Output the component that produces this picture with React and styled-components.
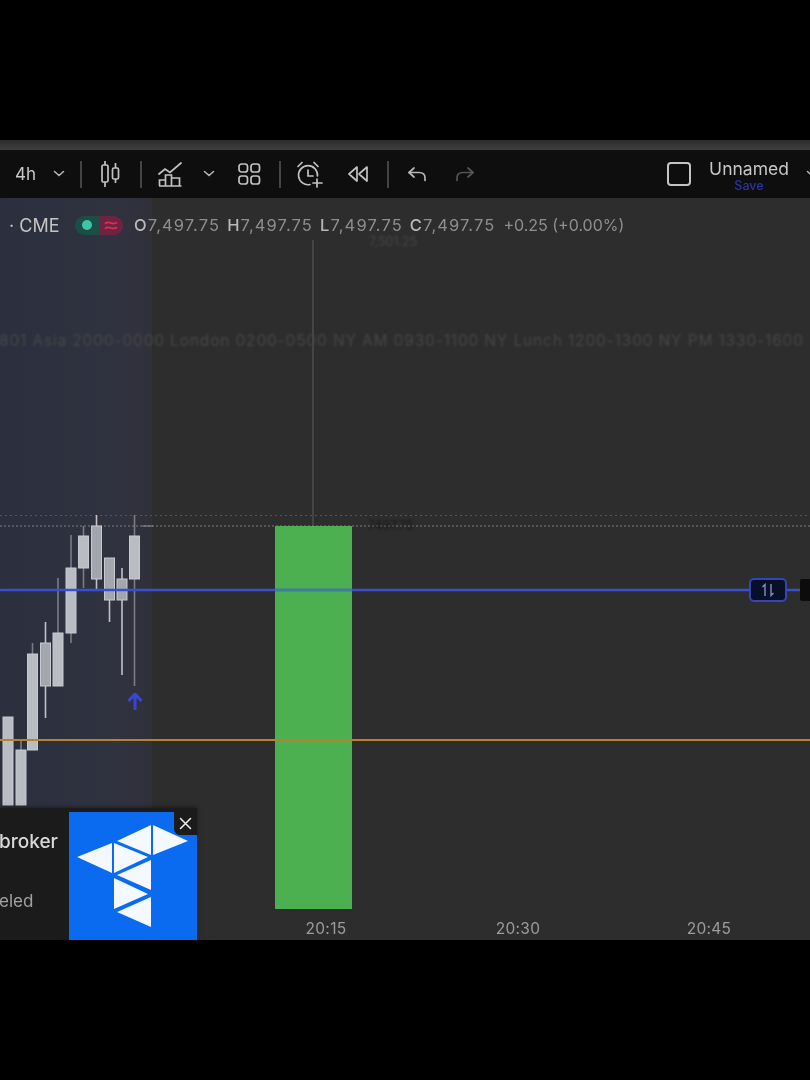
import React from "react"
import styled, { createGlobalStyle } from "styled-components"

const GlobalStyle = createGlobalStyle`
  html, body {
    margin: 0;
    padding: 0;
    background: #000;
  }
  body {
    font-family: Inter, "Liberation Sans", sans-serif;
  }
`

const Page = styled.div`
  width: 810px;
  height: 1080px;
  display: flex;
  flex-direction: column;
  background: #000;
  overflow: hidden;
`
const Letterbox = styled.div`
  height: 140px;
  flex: none;
  background: #000;
`
const Strip = styled.div`
  height: 10px;
  flex: none;
  background: linear-gradient(#2c2c2c, #3e3e3e);
`
const Toolbar = styled.div`
  height: 48px;
  flex: none;
  display: flex;
  align-items: center;
  padding-left: 10px;
  background: #0e0e0e;
  color: #bdbdbd;
  overflow: hidden;
  filter: blur(0.5px);
`
const Slot = styled.div`
  width: ${(p) => p.$w}px;
  flex: none;
  display: flex;
  align-items: center;
  justify-content: center;
`
const Interval = styled.span`
  font-size: 17px;
  color: #c9c9c9;
`
const Separator = styled.div`
  width: 1.5px;
  height: 27px;
  background: #444;
`
const LayoutGroup = styled.div`
  margin-left: auto;
  margin-right: -8px;
  display: flex;
  align-items: center;
`
const LayoutBox = styled.div`
  width: 24px;
  height: 24px;
  box-sizing: border-box;
  border: 2px solid #c4c4c4;
  border-radius: 4px;
  margin-right: 17px;
`
const LayoutName = styled.div`
  width: 82px;
  margin-right: 16px;
  padding-top: 4.5px;
  text-align: center;
  line-height: 1;
`
const NameText = styled.div`
  font-size: 17.5px;
  color: #c6c6c6;
`
const SaveText = styled.div`
  font-size: 12.5px;
  font-weight: 500;
  color: #2f33a8;
  margin-top: 2px;
`
const Chart = styled.div`
  position: relative;
  flex: 1;
  overflow: hidden;
  background: #2d2d2d;
`
const Drawing = styled.svg`
  position: absolute;
  inset: 0;
  filter: blur(0.55px);
`
const Legend = styled.div`
  position: relative;
  display: flex;
  align-items: center;
  height: 54px;
  padding-left: 9px;
  font-size: 16.5px;
  white-space: nowrap;
  filter: blur(0.5px);
`
const Exchange = styled.span`
  width: 66px;
  font-size: 18px;
  color: #c4c4c4;
`
const Pills = styled.div`
  display: flex;
  width: 59px;
  filter: blur(0.6px);
`
const Pill = styled.div`
  width: 24px;
  height: 19px;
  display: flex;
  align-items: center;
  justify-content: center;
  background: ${(p) => p.$bg};
  border-radius: ${(p) => p.$radius};
`
const Dot = styled.div`
  width: 10px;
  height: 10px;
  border-radius: 50%;
  background: #3ec4a6;
`
const Ohlc = styled.span`
  color: #8e8e8e;
  margin-right: 7px;
  letter-spacing: 1.1px;
`
const OhlcChange = styled.span`
  color: #8e8e8e;
  font-size: 16px;
  margin-left: 1px;
`
const OhlcKey = styled.b`
  font-weight: 500;
  color: #b9b9b9;
`
const SessionText = styled.div`
  position: absolute;
  left: -1px;
  top: 133px;
  font-size: 15.5px;
  letter-spacing: 0.84px;
  color: #474749;
  white-space: nowrap;
  filter: blur(0.8px);
`
const PriceTag = styled.div`
  position: absolute;
  left: ${(p) => p.$x}px;
  top: ${(p) => p.$y}px;
  font-size: 12.5px;
  line-height: 1;
  color: ${(p) => p.$color};
  filter: blur(0.8px);
`
const TimeLabel = styled.div`
  position: absolute;
  left: ${(p) => p.$x}px;
  bottom: 2px;
  width: 60px;
  text-align: center;
  font-size: 15.5px;
  letter-spacing: 0.3px;
  color: #9c9c9c;
  filter: blur(0.45px);
`
const OrderTag = styled.div`
  position: absolute;
  left: 749px;
  top: 380px;
  width: 38px;
  height: 24px;
  box-sizing: border-box;
  display: flex;
  align-items: center;
  justify-content: center;
  border: 2px solid #3346b8;
  border-radius: 5px;
  background: #0a0f28;
  filter: blur(0.5px);
`
const OrderStub = styled.div`
  position: absolute;
  left: 800px;
  top: 381px;
  width: 14px;
  height: 22px;
  border-radius: 2px;
  background: #0c0c0c;
  filter: blur(0.7px);
`
const Promo = styled.div`
  position: absolute;
  left: 0;
  bottom: 0;
  width: 197px;
  height: 132px;
  box-sizing: border-box;
  padding-top: 4px;
  display: flex;
  background: #1b1b1b;
  box-shadow: 0 -1px 4px rgba(0, 0, 0, 0.4);
`
const PromoText = styled.div`
  width: 69px;
  overflow: hidden;
  display: flex;
  flex-direction: column;
  filter: blur(0.4px);
`
const PromoTitle = styled.div`
  margin: 18px 0 0 -1px;
  font-size: 19px;
  font-weight: 500;
  color: #d8d8d8;
`
const PromoSub = styled.div`
  margin: 38px 0 0 -1px;
  font-size: 17px;
  color: #a2a2a2;
`
const PromoLogo = styled.div`
  position: relative;
  width: 128px;
  background: #0a6bf0;
  filter: blur(0.3px);
`
const CloseButton = styled.div`
  position: absolute;
  right: 0;
  top: 0;
  width: 23px;
  height: 23px;
  display: flex;
  align-items: center;
  justify-content: center;
  background: #1b1b1b;
  border-bottom-left-radius: 6px;
`

const Chevron = () => (
  <svg width="12" height="8" viewBox="0 0 12 8" fill="none" stroke="#b5b5b5" strokeWidth="1.6" strokeLinecap="round">
    <path d="M1.5 1.5 6 5.5l4.5-4" />
  </svg>
)

const CandleIcon = () => (
  <svg width="20" height="28" viewBox="0 0 20 28" fill="none" stroke="#c2c2c2" strokeWidth="1.7">
    <rect x="2" y="5" width="6" height="17" rx="1.5" />
    <path d="M5 1v4M5 22v5" />
    <rect x="12.5" y="8" width="6" height="11" rx="1.5" />
    <path d="M15.5 3v5M15.5 19v4" />
  </svg>
)

const IndicatorIcon = () => (
  <svg width="24" height="26" viewBox="0 0 24 26" fill="none" stroke="#c2c2c2" strokeWidth="1.7">
    <path d="M1 13l6-5 5 3.5L23 2" strokeLinecap="round" />
    <path d="M1 25h22.5M1.5 25v-6h6v6M7.5 25V14h6v11M13.5 25v-8h8v8" />
  </svg>
)

const GridIcon = () => (
  <svg width="23" height="22" viewBox="0 0 23 22" fill="none" stroke="#c2c2c2" strokeWidth="1.7">
    <rect x="1" y="1" width="8.5" height="8" rx="2.5" />
    <rect x="13" y="1" width="8.5" height="8" rx="2.5" />
    <rect x="1" y="13" width="8.5" height="8" rx="2.5" />
    <rect x="13" y="13" width="8.5" height="8" rx="2.5" />
  </svg>
)

const AlarmIcon = () => (
  <svg width="27" height="27" viewBox="0 0 27 27" fill="none" stroke="#c2c2c2" strokeWidth="1.7" strokeLinecap="round">
    <path d="M14 23.5A9.5 9.5 0 1 1 21.5 15" />
    <path d="M12 9v6h5" />
    <path d="M2 5.5 6 1.5M18 1.5l4 4" />
    <path d="M21 18v8M17 22h9" />
  </svg>
)

const RewindIcon = () => (
  <svg width="22" height="18" viewBox="0 0 22 18" fill="none" stroke="#c2c2c2" strokeWidth="1.7" strokeLinejoin="round">
    <path d="M10 2 2 9l8 7zM20 2l-8 7 8 7z" />
  </svg>
)

const UndoIcon = ({ color, flip }) => (
  <svg width="20" height="15" viewBox="0 0 20 15" fill="none" stroke={color} strokeWidth="1.7" strokeLinecap="round" strokeLinejoin="round" transform={flip ? "scale(-1 1)" : undefined}>
    <path d="M7 1 2 5.5l5 4.5" />
    <path d="M2 5.5h10c3.5 0 6 2 6 5.5v2.5" />
  </svg>
)

const WaveIcon = () => (
  <svg width="14" height="11" viewBox="0 0 16 12" fill="none" stroke="#d8305a" strokeWidth="2">
    <path d="M1 4c3-2.400 5-1.600 7-.8s4 1.400 7-.8M1 9.600c3-2.400 5-1.600 7-.8s4 1.400 7-.8" />
  </svg>
)

const candles = [
  { x: 8, wt: 717, wb: 805, bt: 717, bb: 805 },
  { x: 21, wt: 739, wb: 805, bt: 750, bb: 805 },
  { x: 32.5, wt: 643, wb: 750, bt: 654, bb: 750 },
  { x: 45.5, wt: 622, wb: 718, bt: 643, bb: 686, hollow: true },
  { x: 58, wt: 578, wb: 686, bt: 633, bb: 686 },
  { x: 71, wt: 535, wb: 643, bt: 568, bb: 633 },
  { x: 83.5, wt: 526, wb: 588, bt: 536, bb: 568 },
  { x: 96.5, wt: 515, wb: 590, bt: 526, bb: 579, hollow: true },
  { x: 109.5, wt: 558, wb: 622, bt: 558, bb: 600, hollow: true },
  { x: 122, wt: 568, wb: 675, bt: 579, bb: 600, hollow: true },
  { x: 134.5, wt: 515, wb: 686, bt: 536, bb: 579 },
]

const ChartDrawing = () => (
  <Drawing width="810" height="742" viewBox="0 198 810 742">
    <defs>
      <linearGradient id="session" x1="0" y1="0" x2="1" y2="0">
        <stop offset="0" stopColor="#2b2f3e" />
        <stop offset="0.8" stopColor="#30323f" />
        <stop offset="1" stopColor="#30303a" />
      </linearGradient>
    </defs>
    <rect x="0" y="198" width="152" height="742" fill="url(#session)" />
    <path d="M313 240v286" stroke="#5e5e5e" strokeWidth="1" />
    <path d="M0 515.5h810" stroke="#555" strokeWidth="1" strokeDasharray="2 3" />
    <path d="M0 526h810" stroke="#808080" strokeWidth="1" strokeDasharray="2 2" />
    <path d="M142 526h11" stroke="#8f8f8f" strokeWidth="1" />
    <rect x="275" y="526" width="77" height="383" fill="#4cb050" />
    {candles.map((c) => (
      <g key={c.x}>
        <path d={`M${c.x} ${c.wt}V${c.wb}`} stroke={c.hollow ? "#c0c1c8" : "#7a7c84"} strokeWidth="1.6" />
        <rect
          x={c.x - 5}
          y={c.bt}
          width="10"
          height={c.bb - c.bt}
          fill={c.hollow ? "#a4a6ad" : "#babcc4"}
          stroke="#c8c9d0"
          strokeWidth="1"
        />
      </g>
    ))}
    <path d="M0 590h750M786 590h24" stroke="#3850d0" strokeWidth="2.4" />
    <path d="M275 590h77" stroke="#3e7fa0" strokeWidth="2.4" />
    <path d="M0 740h810" stroke="#b5822f" strokeWidth="1.8" />
    <path d="M135 710v-15M128.500 701l6.500-7 6.500 7" stroke="#3a45d8" strokeWidth="3" fill="none" strokeLinejoin="round" />
  </Drawing>
)

const TriangleLogo = () => (
  <svg width="128" height="128" viewBox="0 0 128 128" fill="#f4f8ff">
    <polygon points="8,45 43,31 43,61" />
    <polygon points="48,29 82,13 82,43" />
    <polygon points="84,13 119,29 84,43" />
    <polygon points="45,31 79,45 45,61" />
    <polygon points="48,63 82,48 82,78" />
    <polygon points="45,66 79,82 45,97" />
    <polygon points="48,100 82,85 82,115" />
  </svg>
)

const App = () => {
  return (
    <Page>
      <GlobalStyle />
      <Letterbox />
      <Strip />
      <Toolbar>
        <Slot $w={31}><Interval>4h</Interval></Slot>
        <Slot $w={36}><Chevron /></Slot>
        <Slot $w={8}><Separator /></Slot>
        <Slot $w={50}><CandleIcon /></Slot>
        <Slot $w={12}><Separator /></Slot>
        <Slot $w={46}><IndicatorIcon /></Slot>
        <Slot $w={32}><Chevron /></Slot>
        <Slot $w={48}><GridIcon /></Slot>
        <Slot $w={14}><Separator /></Slot>
        <Slot $w={44}><AlarmIcon /></Slot>
        <Slot $w={54}><RewindIcon /></Slot>
        <Slot $w={6}><Separator /></Slot>
        <Slot $w={52}><UndoIcon color="#b5b5b5" /></Slot>
        <Slot $w={44}><UndoIcon color="#555" flip /></Slot>
        <LayoutGroup>
          <LayoutBox />
          <LayoutName>
            <NameText>Unnamed</NameText>
            <SaveText>Save</SaveText>
          </LayoutName>
          <Slot $w={12}><Chevron /></Slot>
        </LayoutGroup>
      </Toolbar>
      <Chart>
        <ChartDrawing />
        <Legend>
          <Exchange>· CME</Exchange>
          <Pills>
            <Pill $bg="#1b4e47" $radius="9px 0 0 9px"><Dot /></Pill>
            <Pill $bg="#6e2340" $radius="0 9px 9px 0"><WaveIcon /></Pill>
          </Pills>
          <Ohlc><OhlcKey>O</OhlcKey>7,497.75</Ohlc>
          <Ohlc><OhlcKey>H</OhlcKey>7,497.75</Ohlc>
          <Ohlc><OhlcKey>L</OhlcKey>7,497.75</Ohlc>
          <Ohlc><OhlcKey>C</OhlcKey>7,497.75</Ohlc>
          <OhlcChange>+0.25 (+0.00%)</OhlcChange>
        </Legend>
        <SessionText>801 Asia 2000-0000 London 0200-0500 NY AM 0930-1100 NY Lunch 1200-1300 NY PM 1330-1600</SessionText>
        <PriceTag $x={369} $y={38} $color="#474747">7,501.25</PriceTag>
        <PriceTag $x={368} $y={322} $color="#1a1a1a">7497.75</PriceTag>
        <OrderTag>
          <svg width="14" height="14" viewBox="0 0 14 14" fill="none" stroke="#7f8fc0" strokeWidth="1.4">
            <path d="M4 13V1.500L1.500 4M10 1v11.500L12.500 10" />
          </svg>
        </OrderTag>
        <OrderStub />
        <TimeLabel $x={296}>20:15</TimeLabel>
        <TimeLabel $x={488}>20:30</TimeLabel>
        <TimeLabel $x={679}>20:45</TimeLabel>
        <Promo>
          <PromoText>
            <PromoTitle>broker</PromoTitle>
            <PromoSub>eled</PromoSub>
          </PromoText>
          <PromoLogo>
            <TriangleLogo />
            <CloseButton>
              <svg width="13" height="13" viewBox="0 0 13 13" stroke="#e8e8e8" strokeWidth="1.6" strokeLinecap="round">
                <path d="M1.500 1.500l10 10M11.500 1.500l-10 10" />
              </svg>
            </CloseButton>
          </PromoLogo>
        </Promo>
      </Chart>
      <Letterbox />
    </Page>
  )
}

export default App
